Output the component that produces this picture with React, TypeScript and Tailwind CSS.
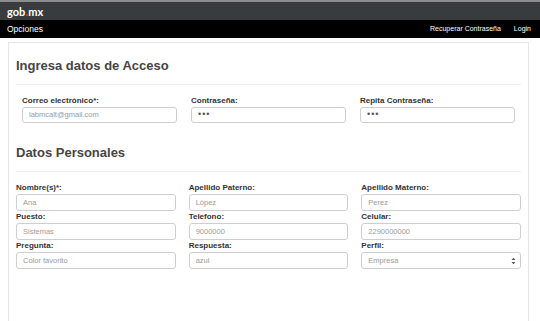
import React from "react";

function Field({ label, value, pw, select, h = 17 }: { label: string; value: string; pw?: boolean; select?: boolean; h?: number }) {
  return (
    <div className="flex flex-col">
      <div className="h-[12px] text-[8px] leading-[12px] font-bold text-[#333]">{label}</div>
      <div
        className={`${h === 16 ? "h-[16px]" : "h-[17px]"} border border-[#cfcfcf] rounded-[3px] flex items-center justify-between pl-[6px] pr-[4px] bg-white`}
      >
        <span className={pw ? "text-[9px] text-[#555] tracking-[1px]" : "text-[7.5px] text-[#9a9a9a]"}>{value}</span>
        {select && (
          <svg width="5" height="8" viewBox="0 0 5 8">
            <path d="M0.5 3 L2.5 0.8 L4.5 3 Z" fill="#555" />
            <path d="M0.5 5 L2.5 7.2 L4.5 5 Z" fill="#555" />
          </svg>
        )}
      </div>
    </div>
  );
}

export default function App() {
  return (
    <div className="w-[540px] h-[321px] bg-white overflow-hidden flex flex-col" style={{ fontFamily: "'Liberation Sans', Arial, sans-serif" }}>
      <div className="h-[20px] bg-[#393c3e] border-t-2 border-[#8a8c8d] flex items-center px-[7px] shrink-0">
        <span className="text-white font-bold text-[11px] leading-none flex items-baseline" style={{ fontFamily: "Lato, 'Liberation Sans', sans-serif" }}>
          gob<span className="inline-block w-[2px] h-[2px] bg-[#e4261c] mx-[0.5px]" />mx
        </span>
      </div>
      <div className="h-[18px] bg-black flex items-center justify-between px-[7px] text-white shrink-0">
        <span className="text-[8.5px]">Opciones</span>
        <div className="flex gap-[13px] text-[7px] pr-[2px]">
          <span>Recuperar Contraseña</span>
          <span>Login</span>
        </div>
      </div>
      <div className="flex-1 pt-[4px] pl-[8px] pr-[11px]">
        <div className="h-full border border-b-0 border-[#e6e6e6] px-[7px] pt-[15px]">
          <h2 className="text-[13px] leading-[16px] font-bold text-[#454545]">Ingresa datos de Acceso</h2>
          <div className="mt-[10px] h-px bg-[#eeeeee]" />
          <div className="mt-[10px] px-[6px] grid grid-cols-3 gap-x-[14px] w-[505px]">
            <Field label="Correo electrónico*:" value="labmcalt@gmail.com" h={16} />
            <Field label="Contraseña:" value="•••" pw h={16} />
            <Field label="Repita Contraseña:" value="•••" pw h={16} />
          </div>
          <h2 className="mt-[22px] text-[13px] leading-[16px] font-bold text-[#454545]">Datos Personales</h2>
          <div className="mt-[10px] h-px bg-[#eeeeee]" />
          <div className="mt-[10px] grid grid-cols-3 gap-x-[13px]">
            <Field label="Nombre(s)*:" value="Ana" />
            <Field label="Apellido Paterno:" value="López" />
            <Field label="Apellido Materno:" value="Perez" />
            <Field label="Puesto:" value="Sistemas" />
            <Field label="Telefono:" value="9000000" />
            <Field label="Celular:" value="2290000000" />
            <Field label="Pregunta:" value="Color favorito" />
            <Field label="Respuesta:" value="azul" />
            <Field label="Perfil:" value="Empresa" select />
          </div>
        </div>
      </div>
    </div>
  );
}
